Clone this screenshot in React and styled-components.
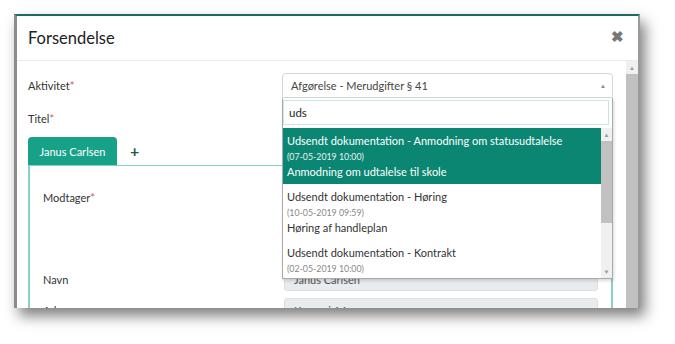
import styled, { createGlobalStyle } from "styled-components";

const GlobalStyle = createGlobalStyle`
  html, body {
    margin: 0;
    padding: 0;
    background: #fff;
  }
  body {
    font-family: Lato, "Open Sans", sans-serif;
    color: #333;
  }
`;

const Page = styled.div`
  padding: 14px 0 0 14px;
  width: 675px;
  height: 344px;
  box-sizing: border-box;
`;

const Frame = styled.div`
  position: relative;
  width: 626px;
  height: 294px;
  box-sizing: border-box;
  border-top: 2px solid #1d6b5a;
  border-left: 3px solid #8c8c8c;
  border-right: 2px solid #9a9a9a;
  overflow: hidden;
  background: #fff;
  box-shadow: 5px 8px 13px rgba(0, 0, 0, 0.5);
  display: flex;
  flex-direction: column;

  &::before {
    content: "";
    position: absolute;
    left: -3px;
    top: 0;
    width: 2px;
    height: 30px;
    background: #1d6b5a;
  }
`;

const Header = styled.div`
  height: 44px;
  flex: none;
  display: flex;
  align-items: center;
  justify-content: space-between;
  padding: 0 14px 0 11px;
  border-bottom: 1px solid #e9ecef;
`;

const Title = styled.h4`
  margin: 0;
  font-size: 16.5px;
  font-weight: 400;
  color: #222;
`;

const Close = styled.span`
  font-size: 15px;
  font-weight: 700;
  color: #777;
  line-height: 1;
  margin-top: -4px;
`;

const BodyRow = styled.div`
  flex: 1;
  display: flex;
  min-height: 0;
`;

const Content = styled.div`
  flex: 1;
  padding: 12px 13px 0 11px;
  position: relative;
`;

const Scrollbar = styled.div`
  width: ${(p) => p.$w}px;
  flex: none;
  background: #f0f0f0;
  display: flex;
  flex-direction: column;
  align-items: center;
`;

const Arrow = styled.div`
  height: ${(p) => p.$h}px;
  flex: none;
  display: flex;
  align-items: center;
  justify-content: center;
  color: #999;
  font-size: 6px;
`;

const Thumb = styled.div`
  width: 100%;
  height: ${(p) => (p.$h ? `${p.$h}px` : "auto")};
  flex: ${(p) => (p.$h ? "none" : 1)};
  background: #c1c1c1;
`;

const Track = styled.div`
  flex: 1;
`;

const FieldRow = styled.div`
  display: grid;
  grid-template-columns: ${(p) => p.$label}px 1fr;
  align-items: center;
  height: ${(p) => p.$h || 25}px;
  margin-bottom: ${(p) => p.$mb ?? 8}px;
`;

const Label = styled.label`
  font-size: 11px;
  color: #333;

  b {
    color: #d9534f;
    font-weight: 400;
  }
`;

const Control = styled.div`
  position: relative;
  height: 100%;
`;

const SelectBox = styled.div`
  height: 100%;
  box-sizing: border-box;
  border: 1px solid #d6d6d6;
  border-radius: 4px 4px 0 0;
  display: flex;
  align-items: center;
  justify-content: space-between;
  padding: 0 6px 0 8px;
  font-size: 11px;
  color: #444;
`;

const Caret = styled.span`
  font-size: 6px;
  color: #888;
`;

const Dropdown = styled.div`
  position: absolute;
  top: 100%;
  left: 0;
  right: 0;
  z-index: 5;
  background: #fff;
  border: 1px solid #aaa;
  border-top: none;
  box-shadow: 1px 2px 3px rgba(0, 0, 0, 0.15);
`;

const SearchWrap = styled.div`
  padding: 2px 3px 3px 0;
`;

const Search = styled.div`
  height: 25px;
  box-sizing: border-box;
  border: 1px solid #c4e8e1;
  display: flex;
  align-items: center;
  padding: 0 5px;
  font-size: 11.5px;
  color: #222;
`;

const ListRow = styled.div`
  display: flex;
  height: 150px;
`;

const List = styled.div`
  flex: 1;
  overflow: hidden;
`;

const Option = styled.div`
  height: 56px;
  box-sizing: border-box;
  padding: 5px 4px 4px 4px;
  background: ${(p) => (p.$active ? "#0b8672" : "#fff")};
  color: ${(p) => (p.$active ? "#fff" : "#333")};
  font-size: 11px;
`;

const OptLine = styled.div`
  line-height: 16px;
  white-space: nowrap;
`;

const OptDate = styled.div`
  line-height: 15px;
  font-size: 8.8px;
  color: ${(p) => (p.$active ? "#e6f3f1" : "#888")};
`;

const Tabs = styled.div`
  display: flex;
  align-items: center;
`;

const Tab = styled.div`
  width: 89px;
  height: 28px;
  box-sizing: border-box;
  background: #17a188;
  color: #fff;
  border-radius: 4px 4px 0 0;
  display: flex;
  align-items: center;
  justify-content: center;
  font-size: 11px;
`;

const AddTab = styled.span`
  margin-left: 13px;
  font-size: 16px;
  font-weight: 700;
  color: #1b5e4f;
  line-height: 1;
`;

const Panel = styled.div`
  border: 2px solid #83d3c6;
  border-top-width: 1px;
  border-bottom: none;
  padding: 19px 13px 0 13px;
  height: 200px;
`;

const ReadInput = styled.div`
  height: 24px;
  box-sizing: border-box;
  background: #e9ecef;
  border: 1px solid #dcdfe3;
  border-radius: 3px;
  display: flex;
  align-items: center;
  padding: 0 9px;
  font-size: 11px;
  color: #555;
`;

const options = [
  {
    title: "Udsendt dokumentation - Anmodning om statusudtalelse",
    date: "(07-05-2019 10:00)",
    sub: "Anmodning om udtalelse til skole",
  },
  {
    title: "Udsendt dokumentation - Høring",
    date: "(10-05-2019 09:59)",
    sub: "Høring af handleplan",
  },
  {
    title: "Udsendt dokumentation - Kontrakt",
    date: "(02-05-2019 10:00)",
    sub: "Kontrakt",
  },
];

export default function App() {
  return (
    <>
      <GlobalStyle />
      <Page>
        <Frame>
          <Header>
            <Title>Forsendelse</Title>
            <Close>✖</Close>
          </Header>
          <BodyRow>
            <Content>
              <FieldRow $label={254}>
                <Label>
                  Aktivitet<b>*</b>
                </Label>
                <Control>
                  <SelectBox>
                    <span>Afgørelse - Merudgifter § 41</span>
                    <Caret>▲</Caret>
                  </SelectBox>
                  <Dropdown>
                    <SearchWrap>
                      <Search>uds</Search>
                    </SearchWrap>
                    <ListRow>
                      <List>
                        {options.map((o, i) => (
                          <Option key={o.title} $active={i === 0}>
                            <OptLine>{o.title}</OptLine>
                            <OptDate $active={i === 0}>{o.date}</OptDate>
                            <OptLine>{o.sub}</OptLine>
                          </Option>
                        ))}
                      </List>
                      <Scrollbar $w={11}>
                        <Arrow $h={13}>▲</Arrow>
                        <Thumb $h={82} />
                        <Track />
                        <Arrow $h={13}>▼</Arrow>
                      </Scrollbar>
                    </ListRow>
                  </Dropdown>
                </Control>
              </FieldRow>
              <FieldRow $label={254} $mb={6}>
                <Label>
                  Titel<b>*</b>
                </Label>
                <Control />
              </FieldRow>
              <Tabs>
                <Tab>Janus Carlsen</Tab>
                <AddTab>+</AddTab>
              </Tabs>
              <Panel>
                <FieldRow $label={241} $mb={57}>
                  <Label>
                    Modtager<b>*</b>
                  </Label>
                  <Control />
                </FieldRow>
                <FieldRow $label={241} $h={24} $mb={7}>
                  <Label>Navn</Label>
                  <ReadInput>Janus Carlsen</ReadInput>
                </FieldRow>
                <FieldRow $label={241} $h={24} $mb={7}>
                  <Label>Adresse</Label>
                  <ReadInput>Krogvej 14</ReadInput>
                </FieldRow>
              </Panel>
            </Content>
            <Scrollbar $w={12}>
              <Arrow $h={13}>▲</Arrow>
              <Thumb />
            </Scrollbar>
          </BodyRow>
        </Frame>
      </Page>
    </>
  );
}
